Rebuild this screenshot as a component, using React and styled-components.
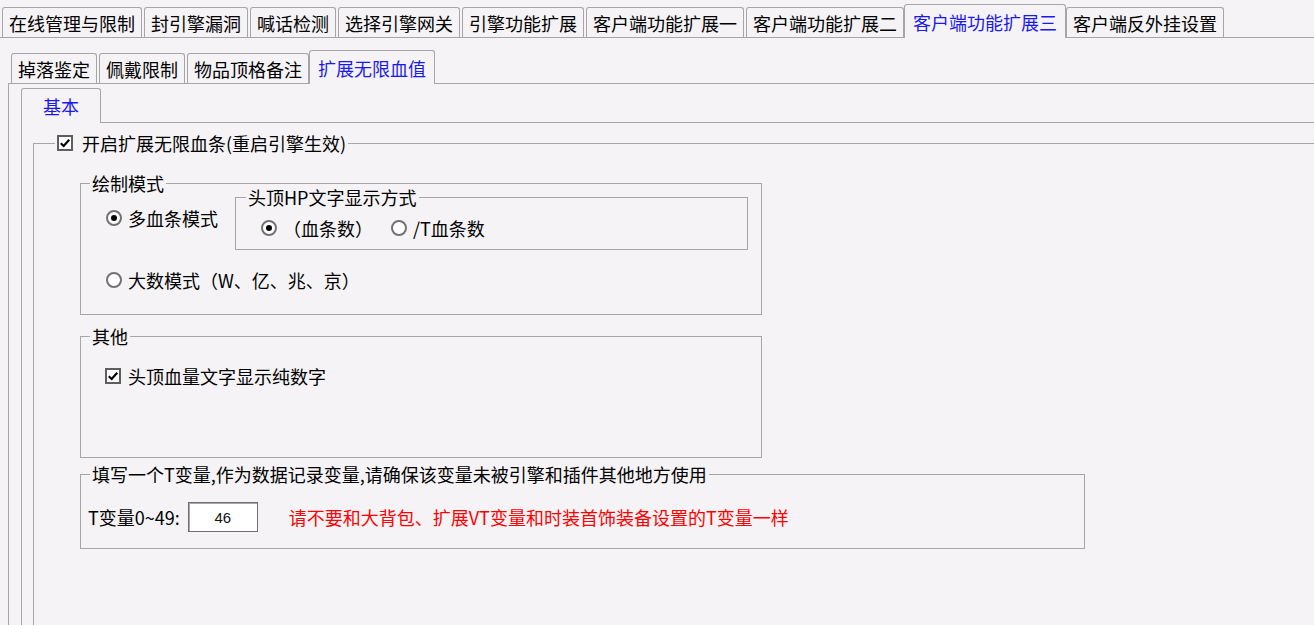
import React from 'react';
import styled, { createGlobalStyle, css } from 'styled-components';

const BG = '#f5f3f6';
const LINE = '#a6a6a6';

const GlobalStyle = createGlobalStyle`
  html, body {
    margin: 0;
    padding: 0;
    background: ${BG};
  }
  body {
    font-family: "Noto Sans CJK SC", "Noto Sans", sans-serif;
    font-size: 18px;
    color: #000;
  }
`;

const Window = styled.div`
  width: 1314px;
  height: 625px;
  box-sizing: border-box;
  padding-top: 4px;
  overflow: hidden;
  background: ${BG};
`;

const TabStrip = styled.div`
  display: flex;
  align-items: flex-end;
  gap: ${p => p.$gap}px;
  height: ${p => p.$h}px;
  padding-left: ${p => p.$inset}px;
`;

const Tab = styled.div`
  box-sizing: border-box;
  height: ${p => p.$h - 3}px;
  padding: 0 ${p => p.$pad}px;
  display: flex;
  align-items: center;
  border: 1px solid ${LINE};
  border-bottom: none;
  border-radius: 3px 3px 0 0;
  background: ${BG};
  white-space: nowrap;

  ${p => p.$active && css`
    height: ${p.$h + 1}px;
    margin: 0 -2px -1px;
    padding: 0 ${p.$pad + 2}px;
    color: #1a1aee;
    position: relative;
    z-index: 1;
  `}
`;

const TabBody = styled.div`
  border-top: 1px solid ${LINE};
  border-left: ${p => (p.$noLeft ? 'none' : `1px solid ${LINE}`)};
  padding: ${p => p.$pad};
  min-height: 700px;
`;

const Group = styled.fieldset`
  box-sizing: border-box;
  margin: ${p => p.$mt || 0}px 0 0;
  padding: 0;
  min-width: 0;
  width: ${p => (p.$w ? `${p.$w}px` : 'auto')};
  flex: ${p => (p.$grow ? 1 : 'none')};
  border: 1px solid ${LINE};
  ${p => p.$tall && css`min-height: 700px;`}
`;

const Legend = styled.legend`
  margin-left: ${p => p.$ml}px;
  padding: 0 2px;
  line-height: ${p => p.$lh || 14}px;
  white-space: nowrap;
`;

const GroupBody = styled.div`
  padding: ${p => p.$pad};
`;

const Row = styled.div`
  display: flex;
  align-items: ${p => p.$align || 'flex-start'};
  gap: ${p => p.$gap || 0}px;
`;

const Choice = styled.label`
  display: flex;
  width: fit-content;
  align-items: center;
  gap: ${p => p.$gap || 7}px;
  height: ${p => p.$h || 20}px;
  line-height: 20px;
  margin-top: ${p => p.$mt || 0}px;
  white-space: nowrap;
`;

const RadioDot = styled.span`
  box-sizing: border-box;
  width: 16px;
  height: 16px;
  border-radius: 50%;
  border: 2px solid #727272;
  background: #fff;
  display: flex;
  align-items: center;
  justify-content: center;

  &::after {
    content: '';
    width: 6px;
    height: 6px;
    border-radius: 50%;
    background: ${p => (p.$on ? '#000' : 'transparent')};
  }
`;

const CheckBox = styled.span`
  box-sizing: border-box;
  width: 16px;
  height: 16px;
  border: 2px solid #5e5e5e;
  background: #fff;
  display: flex;
  align-items: center;
  justify-content: center;
`;

const HpGroup = styled(Group)`
  margin-left: 17px;
`;

const FieldLabel = styled.span`
  white-space: nowrap;
`;

const NumInput = styled.input`
  box-sizing: border-box;
  width: 70px;
  height: 30px;
  margin-left: 8px;
  border: 1px solid #6f6f6f;
  box-shadow: inset 1px 1px 0 #a8a8a8;
  background: #fff;
  font-family: "Liberation Sans", sans-serif;
  font-size: 15px;
  color: #111;
  text-align: center;
  outline: none;
`;

const Warning = styled.span`
  margin-left: 31px;
  color: #ff0000;
  white-space: nowrap;
`;

const Radio = ({ on, children, mt }) => (
  <Choice $mt={mt} $gap={6}>
    <RadioDot $on={on} />
    {children}
  </Choice>
);

const Check = ({ children, gap, h }) => (
  <Choice $gap={gap} $h={h}>
    <CheckBox>
      <svg width="12" height="12" viewBox="0 0 12 12">
        <path d="M1.8 6.2 L4.7 9 L10.2 2.8" fill="none" stroke="#000" strokeWidth="2.2" />
      </svg>
    </CheckBox>
    {children}
  </Choice>
);

const topTabs = ['在线管理与限制', '封引擎漏洞', '喊话检测', '选择引擎网关', '引擎功能扩展', '客户端功能扩展一', '客户端功能扩展二', '客户端功能扩展三', '客户端反外挂设置'];
const subTabs = ['掉落鉴定', '佩戴限制', '物品顶格备注', '扩展无限血值'];

export default function App() {
  return (
    <>
      <GlobalStyle />
      <Window>
        <TabStrip $h={33} $inset={2} $gap={2}>
          {topTabs.map(t => (
            <Tab key={t} $h={33} $pad={6} $active={t === '客户端功能扩展三'}>{t}</Tab>
          ))}
        </TabStrip>
        <TabBody $noLeft $pad="12px 0 0 8px">
          <TabStrip $h={33} $inset={3} $gap={2}>
            {subTabs.map(t => (
              <Tab key={t} $h={33} $pad={6} $active={t === '扩展无限血值'}>{t}</Tab>
            ))}
          </TabStrip>
          <TabBody $pad="4px 0 0 12px">
            <TabStrip $h={34} $inset={2} $gap={2}>
              <Tab $h={34} $pad={19} $active>基本</Tab>
            </TabStrip>
            <TabBody $pad="12px 0 0 11px">
              <Group $w={1400} $tall>
                <Legend $ml={21} $lh={16}>
                  <Check gap={9} h={16}>开启扩展无限血条(重启引擎生效)</Check>
                </Legend>
                <GroupBody $pad="25px 0 0 46px">
                  <Group $w={682}>
                    <Legend $ml={9}>绘制模式</Legend>
                    <GroupBody $pad="0 13px 24px 25px">
                      <Row>
                        <Radio on mt={18}>多血条模式</Radio>
                        <HpGroup $grow>
                          <Legend $ml={10}>头顶HP文字显示方式</Legend>
                          <GroupBody $pad="14px 0 11px 25px">
                            <Row $gap={18}>
                              <Radio on>（血条数）</Radio>
                              <Radio>/T血条数</Radio>
                            </Row>
                          </GroupBody>
                        </HpGroup>
                      </Row>
                      <Radio mt={20}>大数模式（W、亿、兆、京）</Radio>
                    </GroupBody>
                  </Group>

                  <Group $w={682} $mt={14}>
                    <Legend $ml={9}>其他</Legend>
                    <GroupBody $pad="23px 0 71px 24px">
                      <Check gap={7}>头顶血量文字显示纯数字</Check>
                    </GroupBody>
                  </Group>

                  <Group $w={1005} $mt={9}>
                    <Legend $ml={9}>填写一个T变量,作为数据记录变量,请确保该变量未被引擎和插件其他地方使用</Legend>
                    <GroupBody $pad="21px 0 16px 7px">
                      <Row $align="center">
                        <FieldLabel>T变量0~49:</FieldLabel>
                        <NumInput defaultValue="46" />
                        <Warning>请不要和大背包、扩展VT变量和时装首饰装备设置的T变量一样</Warning>
                      </Row>
                    </GroupBody>
                  </Group>
                </GroupBody>
              </Group>
            </TabBody>
          </TabBody>
        </TabBody>
      </Window>
    </>
  );
}
